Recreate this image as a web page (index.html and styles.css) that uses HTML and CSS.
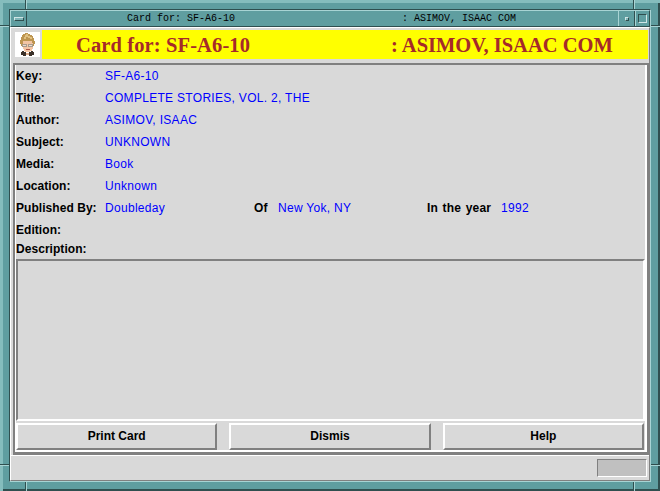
FILE: index.html
```html
<!DOCTYPE html>
<html lang="en">
<head>
<meta charset="utf-8">
<title>Card for: SF-A6-10</title>
<link rel="stylesheet" href="styles.css">
</head>
<body>
<div class="frame">
  <i class="tick v tl"></i><i class="tick h tl2"></i>
  <i class="tick v tr"></i><i class="tick h tr2"></i>
  <i class="tick v bl"></i><i class="tick h bl2"></i>
  <i class="tick v br"></i><i class="tick h br2"></i>
  <div class="wrap">
    <div class="titlebar">
      <div class="wm-btn wm-menu"><span class="menu-glyph"></span></div>
      <div class="wm-title"><span class="t1">Card for: SF-A6-10</span><span class="t2">: ASIMOV, ISAAC COM</span></div>
      <div class="wm-btn wm-min"><span class="min-glyph"></span></div>
      <div class="wm-btn wm-max"><span class="max-glyph"></span></div>
    </div>
    <div class="client">
      <header class="head">
        <div class="avatar">
          <svg width="25" height="25" viewBox="0 0 25 25" shape-rendering="crispEdges">
            <rect width="25" height="25" fill="#fff"/>
            <path d="M10 1h3v1h2v1h2v1h1v2h1v3h1v3h-1v2h-1v-3h-1V9H8v3H7v2H6v-2H5V8h1V5h1V3h1V2h2z" fill="#bd9550"/>
            <path d="M11 2h2v2h2v2h-2V5h-2v2H9V5h1V3h1zM15 5h2v2h-2z" fill="#e0c080"/>
            <path d="M8 9h9v2h1v6h-1v2h-2v1h-5v-1H9v-2H8v-6z" fill="#f2c4a4"/>
            <path d="M7 12h5v3H7zM13 12h5v3h-5z" fill="#a89a8c"/>
            <path d="M8 13h3v1H8zM14 13h3v1h-3z" fill="#e8dcd0"/>
            <path d="M11 17h4v1h-4z" fill="#b05848"/>
            <path d="M7 19h2v1h2v1h3v-1h2v-1h2v1h1v3h-2v1h-3v-1h-3v1H8v-1H6v-3h1z" fill="#3a3028"/>
            <path d="M11 21h3v2h-3z" fill="#d8a888"/>
          </svg>
        </div>
        <div class="banner"><span class="b1">Card for: SF-A6-10</span><span class="b2">: ASIMOV, ISAAC COM</span></div>
      </header>
      <main class="panel">
        <div class="panel-inner">
          <div class="fields">
            <div class="row"><span class="lbl">Key:</span><span class="val">SF-A6-10</span></div>
            <div class="row"><span class="lbl">Title:</span><span class="val">COMPLETE STORIES, VOL. 2, THE</span></div>
            <div class="row"><span class="lbl">Author:</span><span class="val">ASIMOV, ISAAC</span></div>
            <div class="row"><span class="lbl">Subject:</span><span class="val">UNKNOWN</span></div>
            <div class="row"><span class="lbl">Media:</span><span class="val">Book</span></div>
            <div class="row"><span class="lbl">Location:</span><span class="val">Unknown</span></div>
            <div class="row"><span class="lbl">Published By:</span><span class="val pub">Doubleday</span><span class="lbl of">Of</span><span class="val city">New Yok, NY</span><span class="lbl yr">In the year</span><span class="val">1992</span></div>
            <div class="row"><span class="lbl">Edition:</span></div>
            <div class="row desc"><span class="lbl">Description:</span></div>
          </div>
          <div class="textarea"></div>
          <div class="buttons">
            <button class="btn">Print Card</button>
            <button class="btn">Dismis</button>
            <button class="btn">Help</button>
          </div>
        </div>
      </main>
      <footer class="status"><div class="indicator"></div></footer>
    </div>
  </div>
</div>
</body>
</html>
```
FILE: styles.css
```css
* { box-sizing: border-box; }
html, body { margin: 0; padding: 0; }
body { width: 660px; height: 491px; overflow: hidden; background: #5f9ea0; }
.frame {
  position: relative;
  width: 660px; height: 491px;
  padding: 9px;
  background: #5f9ea0;
  box-shadow: inset 3px 3px 0 #85bdbd, inset -2px -2px 0 #2f4f4f;
}
.tick { position: absolute; background: #2f4f4f; display: block; }
.tick.v { width: 1px; height: 9px; box-shadow: 1px 0 0 #a8d4d4; }
.tick.h { height: 1px; width: 9px; box-shadow: 0 1px 0 #a8d4d4; }
.tl { left: 25px; top: 0; }
.tl2 { left: 0; top: 25px; }
.tr { left: 633px; top: 0; }
.tr2 { left: 651px; top: 25px; }
.bl { left: 25px; top: 482px; }
.bl2 { left: 0; top: 464px; }
.br { left: 633px; top: 482px; }
.br2 { left: 651px; top: 464px; }
.wrap {
  height: 473px;
  border: 1px solid #2f4f4f;
  border-right-color: #a8d4d4;
  border-bottom-color: #a8d4d4;
  display: flex;
  flex-direction: column;
}
.titlebar {
  display: flex;
  height: 17px;
  flex: none;
  background: #5f9ea0;
  border: 1px solid #2f4f4f;
  border-top-color: #a8d4d4;
  border-left-color: #a8d4d4;
}
.wm-btn { flex: none; display: flex; align-items: center; justify-content: center; }
.wm-menu { width: 16px; border-right: 1px solid #2f4f4f; }
.wm-min { width: 17px; border-left: 1px solid #a8d4d4; border-right: 1px solid #2f4f4f; }
.wm-max { width: 14px; border-left: 1px solid #a8d4d4; }
.menu-glyph { width: 10px; height: 4px; background: #7fb5b7; border: 1px solid #2f4f4f; border-top-color: #cfe6e6; border-left-color: #cfe6e6; }
.min-glyph { width: 4px; height: 4px; background: #7fb5b7; border: 1px solid #2f4f4f; border-top-color: #cfe6e6; border-left-color: #cfe6e6; }
.max-glyph { width: 9px; height: 9px; background: #5f9ea0; border: 1px solid #cfe6e6; border-top-color: #2f4f4f; border-left-color: #2f4f4f; }
.wm-title {
  flex: 1;
  display: flex;
  align-items: center;
  font: 10px/14px "Liberation Mono", monospace;
  color: #000;
  padding-left: 100px;
}
.t1 { width: 275px; }
.client {
  flex: 1;
  background: #d9d9d9;
  border: 1px solid #808080;
  border-top-color: #fff;
  border-left-color: #fff;
  display: flex;
  flex-direction: column;
}
.head { display: flex; height: 35px; padding: 2px 1px 4px 4px; gap: 2px; flex: none; }
.avatar { width: 25px; height: 25px; margin-top: 2px; flex: none; }
.avatar svg { display: block; }
.banner {
  flex: 1;
  background: #ff0;
  display: flex;
  align-items: center;
  font: bold 20.5px/24px "Liberation Serif", serif;
  color: #a52a2a;
  padding-left: 34px;
  white-space: nowrap;
}
.b1 { width: 315px; letter-spacing: 0.12px; }
.panel {
  flex: 1;
  margin-left: 2px;
  border: 2px solid #808080;
  border-bottom-width: 3px;
  display: flex;
  flex-direction: column;
  min-height: 0;
}
.panel-inner {
  flex: 1;
  display: flex;
  flex-direction: column;
  border-left: 1px solid #fff;
  border-right: 2px solid #fff;
  border-bottom: 2px solid #fff;
}
.fields { flex: none; }
.row { height: 22px; display: flex; align-items: center; white-space: nowrap; }
.row.desc { height: 18px; padding-bottom: 2px; }
.lbl { font: bold 12px/16px "Liberation Sans", sans-serif; color: #000; letter-spacing: 0.05px; }
.row > .lbl:first-child { width: 89px; flex: none; }
.val { font: 12px/16px "Liberation Sans", sans-serif; color: #00f; letter-spacing: 0.3px; }
.pub { width: 149px; flex: none; }
.of { width: 24px; flex: none; }
.city { width: 149px; flex: none; }
.yr { width: 74px; flex: none; letter-spacing: 0.2px; word-spacing: 1px; }
.textarea {
  flex: 1;
  margin-bottom: 2px;
  border: 2px solid #808080;
  border-right-color: #fff;
  border-bottom-color: #fff;
  background: #d9d9d9;
}
.buttons { display: flex; gap: 12px; padding-right: 1px; height: 27px; flex: none; }
.btn {
  flex: 1;
  height: 27px;
  margin: 0;
  padding: 0 0 2px;
  background: #d9d9d9;
  border: 2px solid #808080;
  border-top-color: #fff;
  border-left-color: #fff;
  border-radius: 0;
  font: bold 12px/16px "Liberation Sans", sans-serif;
  color: #000;
}
.status {
  flex: none;
  height: 25px;
  border-top: 1px solid #fff;
  display: flex;
  justify-content: flex-end;
  align-items: center;
  padding-right: 2px;
}
.indicator {
  width: 50px;
  height: 18px;
  background: #c0c0c0;
  border: 1px solid #808080;
  border-right-color: #fff;
  border-bottom-color: #fff;
}
```
